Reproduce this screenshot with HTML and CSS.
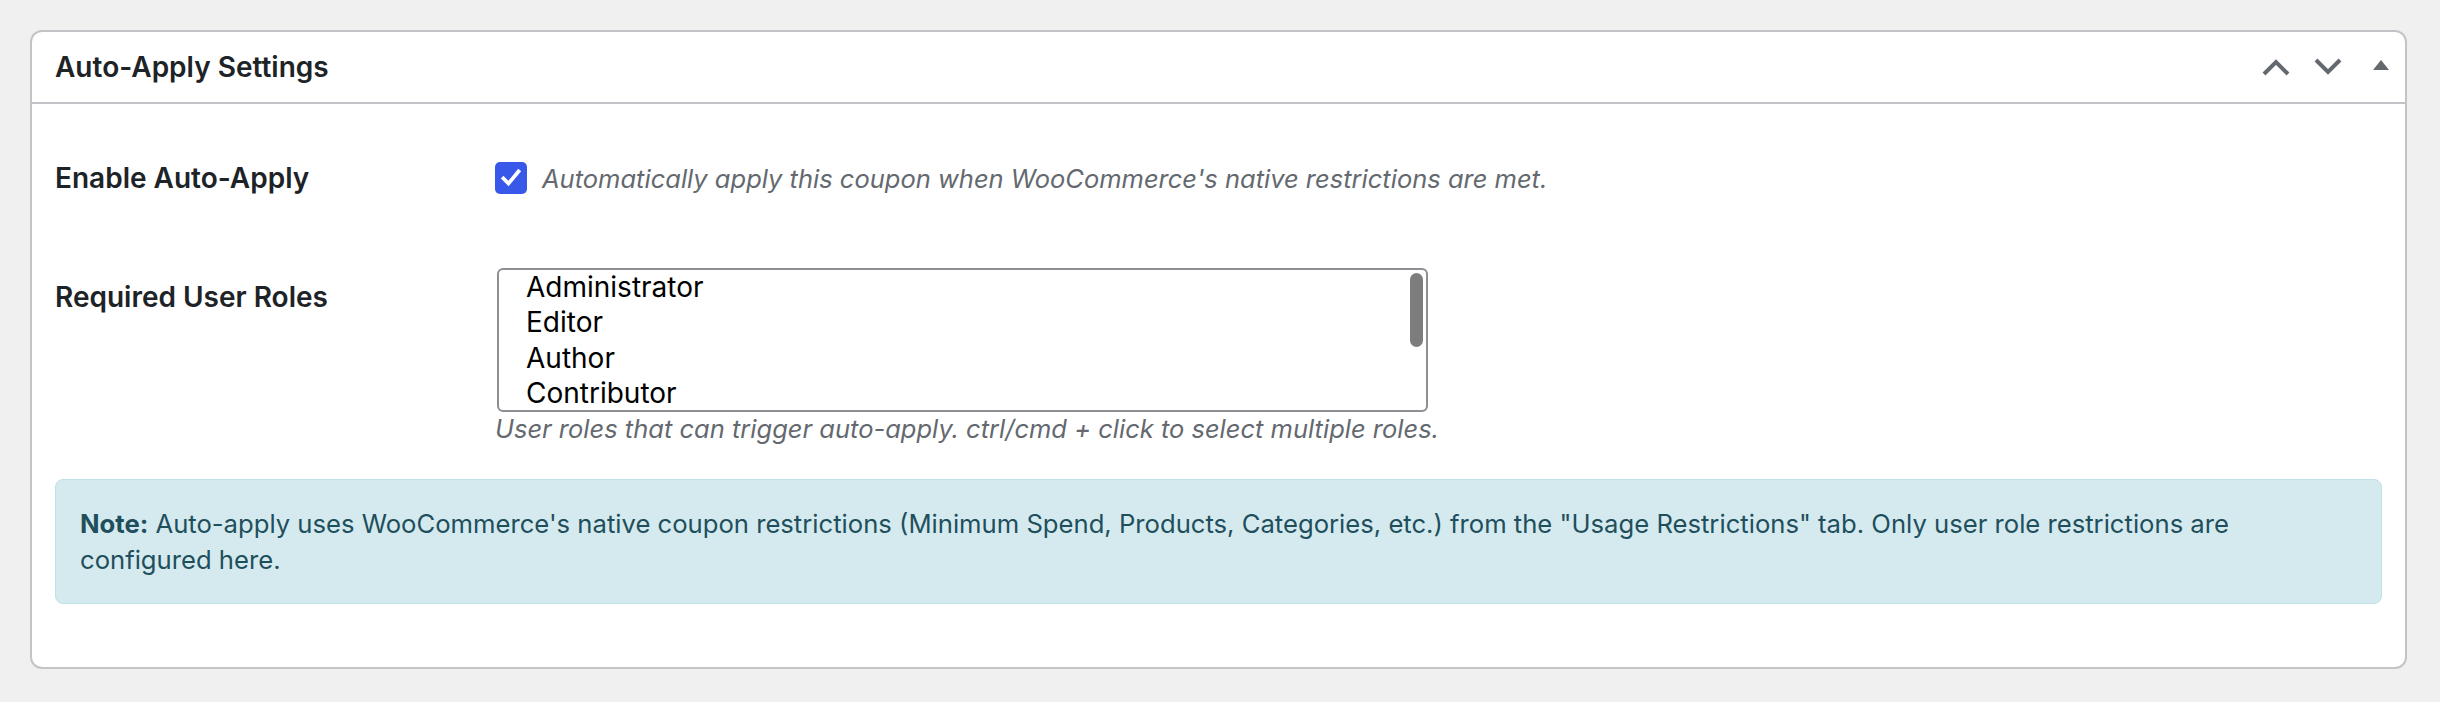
FILE: index.html
```html
<!DOCTYPE html>
<html lang="en">
<head>
  <meta charset="UTF-8" />
  <title>Auto-Apply Settings</title>
  <link rel="stylesheet" href="styles.css">
</head>
<body>

  <div class="postbox">
    <div class="postbox-header">
      <h2 class="hndle">Auto-Apply Settings</h2>
      <div class="handle-actions">
        <button class="handle-btn" aria-label="Move up">
          <svg width="28" height="18" viewBox="0 0 28 18"><path d="M2 16 L14 4 L26 16" fill="none" stroke="currentColor" stroke-width="4"/></svg>
        </button>
        <button class="handle-btn" aria-label="Move down">
          <svg width="28" height="18" viewBox="0 0 28 18"><path d="M2 2 L14 14 L26 2" fill="none" stroke="currentColor" stroke-width="4"/></svg>
        </button>
        <button class="handle-btn toggle" aria-label="Toggle panel">
          <svg width="16" height="10" viewBox="0 0 16 10"><path d="M8 0 L16 10 L0 10 Z" fill="currentColor"/></svg>
        </button>
      </div>
    </div>

    <div class="inside">
      <div class="form-row">
        <div class="form-label">Enable Auto-Apply</div>
        <div class="form-field check-field">
          <span class="checkbox" role="checkbox" aria-checked="true">
            <svg width="22" height="22" viewBox="0 0 22 22"><path d="M3.5 11.5 L8.5 16.5 L18.5 4.5" fill="none" stroke="#fff" stroke-width="3.8" stroke-linecap="square"/></svg>
          </span>
          <span class="description">Automatically apply this coupon when WooCommerce's native restrictions are met.</span>
        </div>
      </div>

      <div class="form-row roles-row">
        <div class="form-label">Required User Roles</div>
        <div class="form-field">
          <div class="listbox" role="listbox" aria-multiselectable="true">
            <div class="options">
              <div class="option">Administrator</div>
              <div class="option">Editor</div>
              <div class="option">Author</div>
              <div class="option">Contributor</div>
            </div>
            <div class="scroll-track"><div class="scroll-thumb"></div></div>
          </div>
          <p class="description help">User roles that can trigger auto-apply. ctrl/cmd + click to select multiple roles.</p>
        </div>
      </div>

      <div class="notice-info">
        <strong>Note:</strong> Auto-apply uses WooCommerce's native coupon restrictions (Minimum Spend, Products, Categories, etc.) from the "Usage Restrictions" tab. Only user role restrictions are configured here.
      </div>
    </div>
  </div>

</body>
</html>
```

FILE: styles.css
```css
body {
  margin: 0;
  background: #f0f0f1;
  font-family: Inter, "Noto Sans", sans-serif;
  color: #1d2327;
}

.postbox {
  margin: 30px 33px 0 30px;
  background: #fff;
  border: 2px solid #c3c4c7;
  border-radius: 12px;
}

.postbox-header {
  display: flex;
  align-items: center;
  justify-content: space-between;
  height: 70px;
  border-bottom: 2px solid #c3c4c7;
  padding: 0 16px 0 23px;
}
.hndle { margin: 0; font-size: 28px; font-weight: 600; }

.handle-actions { display: flex; align-items: center; gap: 24px; color: #646970; }
.handle-btn {
  background: none; border: none; padding: 0; margin: 0;
  color: inherit; display: flex; cursor: pointer;
}
.handle-btn.toggle { margin-left: 7px; margin-top: -4px; }

.inside { padding: 54px 23px 63px 23px; }

.form-row { display: flex; align-items: flex-start; }
.form-label {
  width: 440px; flex: none;
  font-size: 28px; font-weight: 600; line-height: 40px;
}
.form-field { flex: 1; }

.check-field { display: flex; align-items: center; gap: 15px; height: 40px; }
.checkbox {
  width: 32px; height: 32px; border-radius: 5px;
  background: #3858e9;
  display: flex; align-items: center; justify-content: center;
}

.description { font-style: italic; font-size: 25.5px; color: #646970; }

.roles-row { margin-top: 70px; }
.roles-row .form-label { margin-top: 9px; }

.listbox {
  display: flex;
  width: 931px; height: 144px;
  margin-left: 2px;
  box-sizing: border-box;
  border: 2px solid #8c8f94;
  border-radius: 6px;
  overflow: hidden;
}
.options { flex: 1; padding: 0 0 0 27px; }
.option { font-size: 28px; line-height: 35.3px; color: #000; }
.scroll-track { width: 13px; padding: 3px 3px 0 0; }
.scroll-thumb { height: 74px; border-radius: 7px; background: #7d7d7d; }

.help { margin: 2px 0 0 0; line-height: 30px; }

.notice-info {
  margin-top: 35px;
  background: #d5eaef;
  border: 1px solid #bfe0e8;
  border-radius: 8px;
  padding: 26px 80px 25px 24px;
  font-size: 25.65px;
  line-height: 36px;
  color: #1f4f5c;
}
.notice-info strong { font-weight: 700; }
```
